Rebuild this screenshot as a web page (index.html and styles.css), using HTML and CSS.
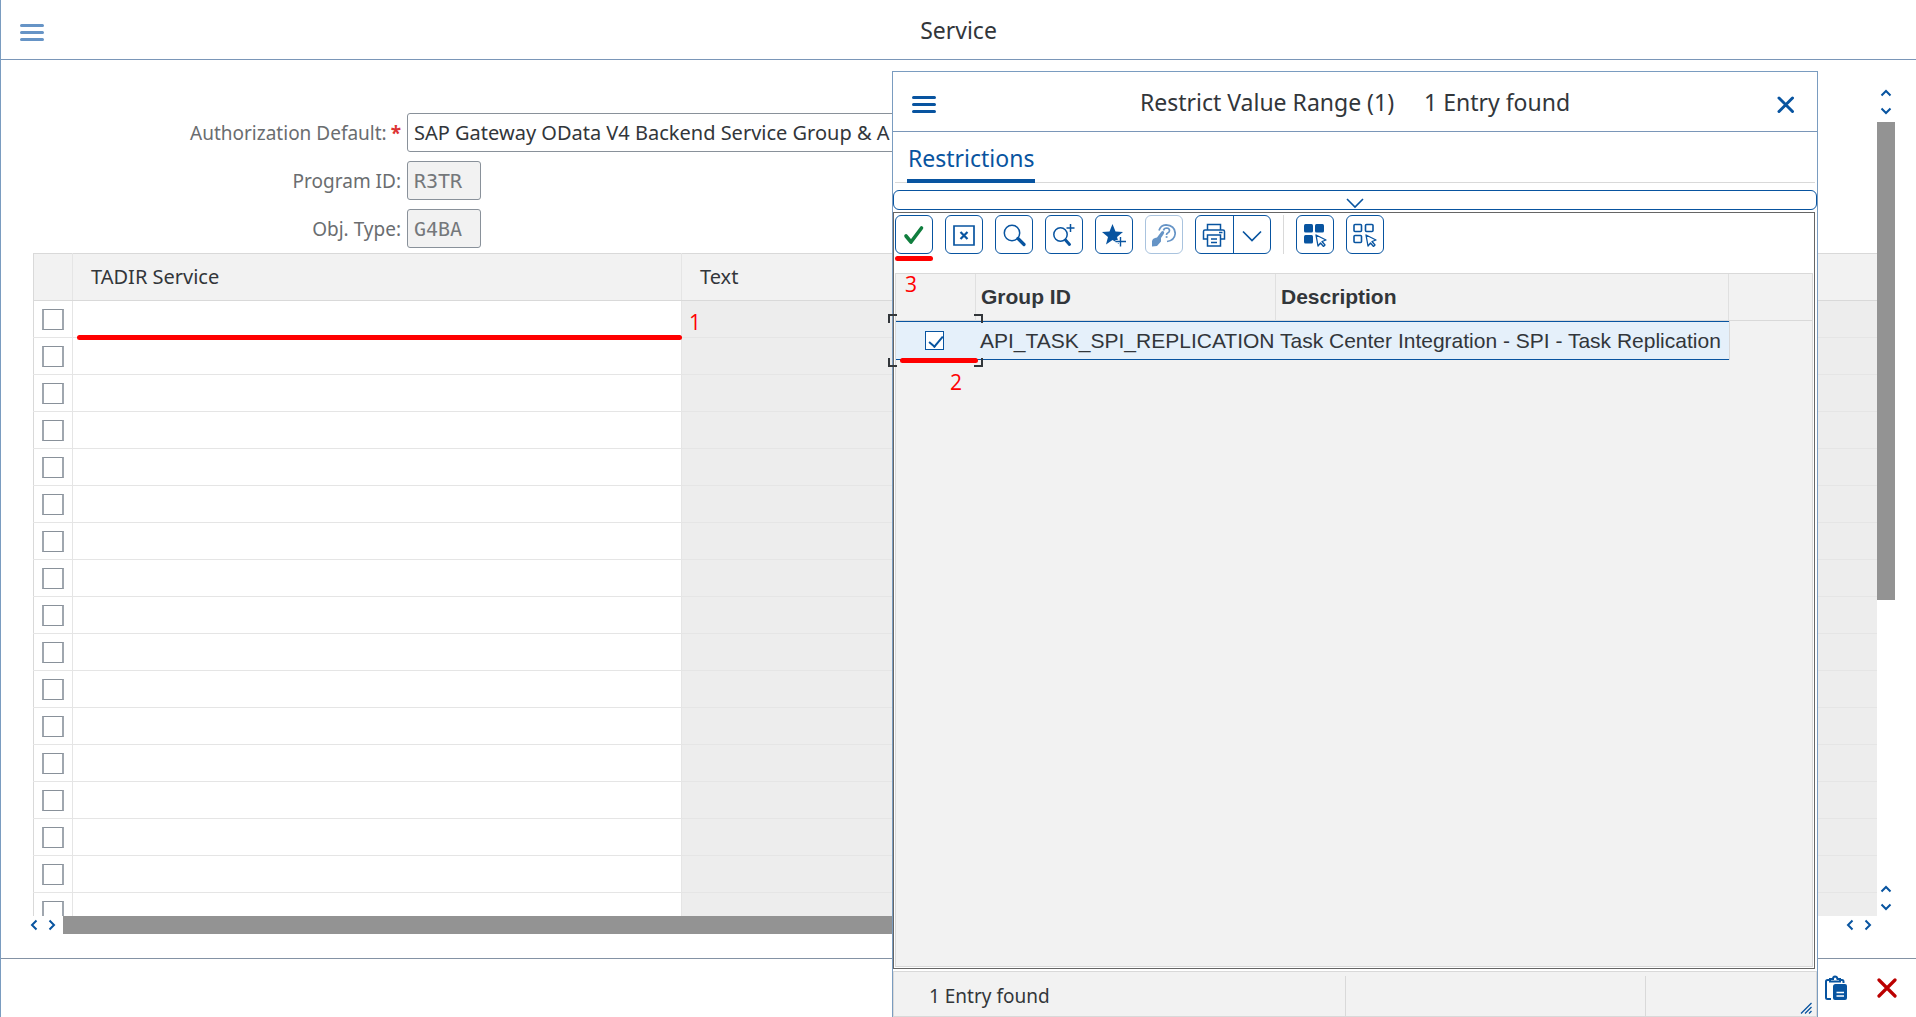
FILE: index.html
```html
<!DOCTYPE html>
<html lang="en">
<head>
<meta charset="utf-8">
<title>Service</title>
<link rel="stylesheet" href="styles.css">
</head>
<body>
<svg class="defs" aria-hidden="true">
  <symbol id="menu" viewBox="0 0 24 18"><path d="M1.500 1.500h21M1.500 8.500h21M1.500 15.500h21" stroke="currentColor" stroke-width="3" stroke-linecap="round"/></symbol>
  <symbol id="up" viewBox="0 0 18 18"><path d="M4.500 11.500 9 7l4.500 4.500" fill="none" stroke="currentColor" stroke-width="2"/></symbol>
  <symbol id="down" viewBox="0 0 18 18"><path d="M4.500 6.500 9 11l4.500-4.500" fill="none" stroke="currentColor" stroke-width="2"/></symbol>
  <symbol id="left" viewBox="0 0 18 18"><path d="M11.500 4.500 7 9l4.500 4.500" fill="none" stroke="currentColor" stroke-width="2"/></symbol>
  <symbol id="right" viewBox="0 0 18 18"><path d="M6.500 4.500 11 9l-4.500 4.500" fill="none" stroke="currentColor" stroke-width="2"/></symbol>
  <symbol id="pointer" viewBox="0 0 12 13"><path d="M1 1l10 5-4 1.500 3 3.500-1.500 1.500-3-3.500L3 12z" fill="#fff" stroke="currentColor" stroke-width="1.300" stroke-linejoin="round"/></symbol>
</svg>

<header class="shell-header">
  <button class="menu-button dim" aria-label="Menu"><svg width="24" height="18"><use href="#menu"/></svg></button>
  <h1>Service</h1>
</header>

<main class="workspace">
  <div class="content">
    <form class="fields">
      <label for="auth">Authorization Default:<span class="required">*</span></label>
      <select id="auth"><option>SAP Gateway OData V4 Backend Service Group &amp; A</option></select>
      <label for="program">Program ID:</label>
      <input id="program" type="text" value="R3TR" readonly>
      <label for="objtype">Obj. Type:</label>
      <input id="objtype" type="text" value="G4BA" readonly>
    </form>
    <table class="services">
      <colgroup><col class="col-select"><col class="col-service"><col></colgroup>
      <thead><tr><th></th><th>TADIR Service</th><th>Text</th></tr></thead>
      <tbody>
        <tr><td><input type="checkbox" aria-label="Select row 1"></td><td class="marked"><span class="stroke stroke-1"></span></td><td class="marked"><span class="step step-1">1</span></td></tr>
        <tr><td><input type="checkbox" aria-label="Select row 2"></td><td></td><td></td></tr>
        <tr><td><input type="checkbox" aria-label="Select row 3"></td><td></td><td></td></tr>
        <tr><td><input type="checkbox" aria-label="Select row 4"></td><td></td><td></td></tr>
        <tr><td><input type="checkbox" aria-label="Select row 5"></td><td></td><td></td></tr>
        <tr><td><input type="checkbox" aria-label="Select row 6"></td><td></td><td></td></tr>
        <tr><td><input type="checkbox" aria-label="Select row 7"></td><td></td><td></td></tr>
        <tr><td><input type="checkbox" aria-label="Select row 8"></td><td></td><td></td></tr>
        <tr><td><input type="checkbox" aria-label="Select row 9"></td><td></td><td></td></tr>
        <tr><td><input type="checkbox" aria-label="Select row 10"></td><td></td><td></td></tr>
        <tr><td><input type="checkbox" aria-label="Select row 11"></td><td></td><td></td></tr>
        <tr><td><input type="checkbox" aria-label="Select row 12"></td><td></td><td></td></tr>
        <tr><td><input type="checkbox" aria-label="Select row 13"></td><td></td><td></td></tr>
        <tr><td><input type="checkbox" aria-label="Select row 14"></td><td></td><td></td></tr>
        <tr><td><input type="checkbox" aria-label="Select row 15"></td><td></td><td></td></tr>
        <tr><td><input type="checkbox" aria-label="Select row 16"></td><td></td><td></td></tr>
        <tr><td><input type="checkbox" aria-label="Select row 17"></td><td></td><td></td></tr>
      </tbody>
    </table>
  </div>
  <div class="scroll vertical">
    <button aria-label="Scroll up"><svg><use href="#up"/></svg></button>
    <button aria-label="Scroll down"><svg><use href="#down"/></svg></button>
    <div class="track"><div class="thumb"></div></div>
    <button aria-label="Page up"><svg><use href="#up"/></svg></button>
    <button aria-label="Page down"><svg><use href="#down"/></svg></button>
  </div>
  <div class="scroll horizontal">
    <button aria-label="Scroll left"><svg><use href="#left"/></svg></button>
    <button aria-label="Scroll right"><svg><use href="#right"/></svg></button>
    <div class="track"><div class="thumb"></div></div>
    <button aria-label="Page left"><svg><use href="#left"/></svg></button>
    <button aria-label="Page right"><svg><use href="#right"/></svg></button>
  </div>
</main>

<footer class="shell-footer">
  <button aria-label="Paste from clipboard">
    <svg width="24" height="26" viewBox="0 0 24 26" fill="none" stroke="#0854a0" stroke-width="2"><path d="M6 5H3.500Q2 5 2 6.500v16Q2 24 3.500 24H7M17 5h1q1.500 0 1.500 1.500V8"/><path d="M6 6.500V4h3q0-2.500 2-2.500T13.500 4H16v2.500z"/><path d="M9 11.500Q9 9 11.500 9H21q2 0 2 2v12q0 2-2 2H11q-2 0-2-2z" fill="#0854a0" stroke="none"/><path d="M12.500 17.500H20M12.500 21H20" stroke="#fff" stroke-width="1.500"/></svg>
  </button>
  <button aria-label="Cancel">
    <svg width="20" height="20" viewBox="0 0 20 20" stroke="#b00" stroke-width="3.200" stroke-linecap="round"><path d="M2 2l16 16M18 2 2 18"/></svg>
  </button>
</footer>

<section class="dialog" role="dialog" aria-labelledby="dialog-title">
  <header class="dialog-header">
    <button class="menu-button" aria-label="Dialog menu"><svg width="24" height="18"><use href="#menu"/></svg></button>
    <h2 id="dialog-title">Restrict Value Range (1)<span class="count">1 Entry found</span></h2>
    <button class="close" aria-label="Close"><svg width="18" height="18" viewBox="0 0 18 18" stroke="currentColor" stroke-width="3" stroke-linecap="round"><path d="M2 2l13.500 13.500M15.500 2 2 15.500"/></svg></button>
  </header>
  <nav class="tabs"><a href="#restrictions">Restrictions</a></nav>
  <button class="expander" aria-label="Expand restrictions"><svg width="18" height="12" viewBox="0 0 18 12" fill="none" stroke="currentColor" stroke-width="1.600"><path d="M1 2l8 8 8-8"/></svg></button>
  <div class="results" id="restrictions">
    <div class="toolbar">
      <button class="tool marked" aria-label="Accept"><svg viewBox="0 0 24 24" fill="none" stroke="#107e3e" stroke-width="3.600" stroke-linecap="round" stroke-linejoin="round"><path d="M4 13l5 6L19.500 5"/></svg><span class="stroke stroke-3"></span></button>
      <button class="tool" aria-label="Cancel selection"><svg viewBox="0 0 24 24" fill="none" stroke="currentColor" stroke-width="1.700"><path d="M2 3h20v19H2z"/><path d="M8.500 9l7 7M15.500 9l-7 7" stroke-width="2.200"/></svg></button>
      <button class="tool" aria-label="Find"><svg viewBox="0 0 24 24" fill="none" stroke="currentColor" stroke-width="1.500"><circle cx="10" cy="10" r="7.700"/><path d="M16 15.500l6 6" stroke-width="3.200" stroke-linecap="round"/></svg></button>
      <button class="tool" aria-label="Find next"><svg viewBox="0 0 24 24" fill="none" stroke="currentColor" stroke-width="1.500"><circle cx="8.500" cy="11.500" r="6.700"/><path d="M18.500 1v8M14.500 5h8"/><path d="M13.500 17l4 4.500" stroke-width="3" stroke-linecap="round"/></svg></button>
      <button class="tool" aria-label="Add to favorites"><svg viewBox="0 0 24 24"><path d="M10.500 1l3 7.500 7.500.5-6 5 2 7-6.500-4L4 21.500 6 14 0 9l7.500-.5z" fill="currentColor"/><path d="M18.500 14v9.500M13.500 18.500H24" stroke="#fff" stroke-width="3"/><path d="M18.500 14v9.500M13.500 18.500H24" stroke="currentColor" stroke-width="1.400"/></svg></button>
      <button class="tool faded" aria-label="Help"><svg viewBox="0 0 24 24" fill="none" stroke="currentColor"><path d="M7 7.500Q8.500 2 14 1.800q9 .5 9.200 8.700-.5 7-8.200 8" stroke-width="1.700"/><path d="M11.500 7.500q.5-2.500 3.200-2.500 2.800.2 2.800 2.500 0 1.500-1.500 2.300-1.500.7-1.500 2.200" stroke-width="1.700"/><path d="M13.700 14h1.800" stroke-width="1.700"/><path d="M0 23.500V18q.5-2.500 3-3l2-.5 4.500-6Q11 7.500 12 8.800q.5 1-.3 2.200L9 15v3.500L5 23z" fill="currentColor" stroke="none"/></svg></button>
      <div class="split">
        <button aria-label="Print"><svg viewBox="0 0 24 24" fill="none" stroke="currentColor" stroke-width="1.500"><path d="M5.500 7V1.500h13V7"/><path d="M5.500 16H1.500V8.500Q1.500 7 3 7h18q1.500 0 1.500 1.500V16h-4"/><path d="M5.500 12h13v11h-13zM9 16h6M9 19.500h6M17 9.500h3.500"/></svg></button>
        <button aria-label="Print options"><svg viewBox="0 0 24 24" fill="none" stroke="currentColor" stroke-width="1.700"><path d="M3 8.500l9 9 9-9"/></svg></button>
      </div>
      <span class="divider"></span>
      <button class="tool" aria-label="Select all"><svg viewBox="0 0 24 24"><g fill="currentColor"><rect x="1" y="1" width="9" height="8.500" rx="1.500"/><rect x="12" y="1" width="9" height="8.500" rx="1.500"/><rect x="1" y="12" width="9" height="8.500" rx="1.500"/></g><use href="#pointer" x="12" y="11" width="12" height="13"/></svg></button>
      <button class="tool" aria-label="Deselect all"><svg viewBox="0 0 24 24"><g fill="none" stroke="currentColor" stroke-width="1.600"><rect x="1" y="1.500" width="7.500" height="7" rx="1"/><rect x="12.500" y="1.500" width="7.500" height="7" rx="1"/><rect x="1" y="12.500" width="7.500" height="7" rx="1"/></g><use href="#pointer" x="12" y="11" width="12" height="13"/></svg></button>
    </div>
    <div class="grid-area">
      <span class="step step-3">3</span>
      <table class="groups">
        <colgroup><col class="col-check"><col class="col-group"><col class="col-description"><col></colgroup>
        <thead><tr><th></th><th>Group ID</th><th>Description</th><th></th></tr></thead>
        <tbody><tr>
          <td class="marked"><input type="checkbox" checked aria-label="Select API_TASK_SPI_REPLICATION"><span class="focus"><i></i><i></i><i></i><i></i></span><span class="stroke stroke-2"></span><span class="step step-2">2</span></td>
          <td>API_TASK_SPI_REPLICATION</td><td>Task Center Integration - SPI - Task Replication</td><td></td>
        </tr></tbody>
      </table>
    </div>
  </div>
  <footer class="status">
    <span class="message">1 Entry found</span><span class="cell"></span>
    <span class="cell grip"><svg width="12" height="12" viewBox="0 0 12 12" stroke="#0854a0" stroke-width="1.300"><path d="M1 11.500 11.500 1M5 11.500l6.500-6.500M9 11.500 11.500 9"/></svg></span>
  </footer>
</section>
</body>
</html>
```
FILE: styles.css
```css
* { box-sizing: border-box; }

body {
  margin: 0;
  height: 100vh;
  display: flex;
  flex-direction: column;
  position: relative;
  overflow: hidden;
  border-left: 1px solid #7a9cc0;
  background: #fff;
  color: #32363a;
  font-family: "Noto Sans", sans-serif;
  font-size: 19px;
}

button {
  margin: 0;
  padding: 0;
  border: 0;
  background: none;
  color: #0854a0;
  display: flex;
  align-items: center;
  justify-content: center;
}

h1, h2 { margin: 0; font-size: 23px; font-weight: 400; line-height: 30px; }

.defs { display: none; }

.shell-header, .dialog-header {
  flex: none;
  display: grid;
  grid-template-columns: 60px 1fr 60px;
  align-items: center;
  height: 60px;
  border-bottom: 1px solid #7a96b8;
  text-align: center;
}
.menu-button { justify-content: flex-start; padding-left: 19px; padding-top: 7px; }
.dim { color: #6694c6; }

.workspace {
  flex: 1;
  min-height: 0;
  display: grid;
  grid-template-columns: minmax(0, 1fr) 18px;
  grid-template-rows: minmax(0, 1fr) 18px;
  padding: 24px 21px 24px 24px;
}
.content { overflow: hidden; padding: 29px 0 0 8px; }

.fields {
  display: grid;
  grid-template-columns: 368px 1fr;
  grid-auto-rows: 39px;
  gap: 9px 6px;
  align-items: center;
  margin-bottom: 5px;
  color: #6a6d70;
}
.fields label { text-align: right; }
.required { margin-left: 4px; color: #d33; font-weight: 700; }
.fields select, .fields input {
  appearance: none;
  height: 39px;
  margin: 0;
  padding: 0 6px;
  border: 1px solid #89919a;
  border-radius: 3px;
  background: #fff;
  color: #32363a;
  font: inherit;
  font-size: 20px;
}
.fields select { width: 640px; }
.fields input {
  width: 74px;
  background: #f2f2f2;
  color: #75787b;
  font-family: "DejaVu Sans Mono", monospace;
}

table { width: 100%; table-layout: fixed; border-collapse: collapse; }

.services th {
  height: 47px;
  padding: 0 18px 2px;
  border: 1px solid #d9d9d9;
  border-right-color: #e5e5e5;
  background: #f2f2f2;
  font-size: 20px;
  font-weight: 400;
  text-align: left;
}
.services td { height: 37px; padding: 0; border: 1px solid #e5e5e5; }
.services td:first-child { border-left-color: #d9d9d9; }
.services td:last-child { background: #ededed; }
.services th:last-child, .services td:last-child { border-right: 0; }
.col-select { width: 39px; }
.col-service { width: 609px; }

input[type="checkbox"] {
  appearance: none;
  display: block;
  width: 22px;
  height: 21px;
  margin: 0 auto;
  border: 1px solid #89919a;
  background: #fff;
}
.services input[type="checkbox"] { border-width: 1px 2px; border-color: #89919a #a0a7af; }

.scroll { display: flex; }
.scroll.vertical { flex-direction: column; }
.scroll button { flex: none; width: 18px; height: 18px; }
.scroll svg { width: 18px; height: 18px; }
.track { flex: 1; }
.thumb { background: #939393; }
.vertical .track { padding-top: 2px; }
.vertical .thumb { width: 18px; height: 63%; }
.horizontal .track { padding-left: 2px; }
.horizontal .thumb { width: 92%; height: 18px; }

.shell-footer {
  flex: none;
  display: flex;
  align-items: center;
  justify-content: flex-end;
  gap: 29px;
  height: 59px;
  padding-right: 19px;
  border-top: 1px solid #8492a4;
}

.dialog {
  position: absolute;
  top: 71px;
  right: 98px;
  bottom: 0;
  left: 891px;
  display: flex;
  flex-direction: column;
  border: 1px solid #7a9cc0;
  border-bottom: 0;
  background: #fff;
}
.count { margin-left: 30px; }
.close { padding: 6px 2px 0 0; }

.tabs {
  flex: none;
  display: flex;
  height: 51px;
  margin: 0 2px;
  padding-left: 12px;
  border-bottom: 1px solid #d9d9d9;
}
.tabs a {
  height: 51px;
  padding: 9px 1px 0;
  border-bottom: 4px solid #0854a0;
  color: #0854a0;
  font-size: 23px;
  line-height: 34px;
  text-decoration: none;
}
.expander {
  flex: none;
  height: 20px;
  margin: 7px 0 2px;
  border: 1px solid #0854a0;
  border-radius: 6px;
}
.expander svg { margin-top: 5px; }

.results {
  flex: 1;
  min-height: 0;
  display: flex;
  flex-direction: column;
  margin-right: 2px;
  padding: 2px 1px 1px;
  border: 1px solid #666;
}
.toolbar { flex: none; display: flex; gap: 12px; height: 58px; align-items: flex-start; }
.tool, .split { width: 38px; height: 39px; border: 1px solid #0854a0; border-radius: 6px; }
.toolbar svg { width: 24px; height: 24px; }
.tool.faded { color: #6694c6; border-color: #a9c3de; }
.split { display: flex; width: 76px; }
.split button { flex: 1; }
.split button + button { border-left: 1px solid #0854a0; }
.divider { width: 1px; height: 39px; background: #d9d9d9; }

.grid-area {
  flex: 1;
  position: relative;
  border: 1px solid #d9d9d9;
  background: #f2f2f2;
}
.groups {
  border-collapse: separate;
  border-spacing: 0;
  font-family: "Liberation Sans", Arial, sans-serif;
  font-size: 21px;
}
.groups th {
  height: 47px;
  padding: 0 5px;
  border-right: 1px solid #e0e0e0;
  border-bottom: 1px solid #d9d9d9;
  text-align: left;
}
.groups td {
  height: 39px;
  padding: 0 4px;
  border-top: 1px solid #0854a0;
  border-bottom: 1px solid #0854a0;
  background: #e5f0fa;
  white-space: nowrap;
}
.groups th:last-child { border-right: 0; }
.groups td:last-child { border-width: 0 0 0 1px; border-style: solid; border-color: #d9d9d9; background: none; }
.groups td:first-child { padding: 0; }
.col-check { width: 80px; }
.col-group { width: 300px; }
.col-description { width: 453px; }
.groups input[type="checkbox"] {
  position: relative;
  width: 19px;
  height: 19px;
  margin-left: 29px;
  border-color: #0854a0;
}
.groups input[type="checkbox"]::after {
  content: "";
  position: absolute;
  left: 6px;
  top: 1px;
  width: 6px;
  height: 12px;
  border: solid #0854a0;
  border-width: 0 2px 2px 0;
  transform: rotate(40deg);
}

.status {
  flex: none;
  display: grid;
  grid-template-columns: 451px 300px 1fr;
  height: 46px;
  margin-top: 2px;
  padding: 4px 0 2px;
  border: 1px solid #d9d9d9;
  background: #f2f2f2;
}
.message { padding-left: 35px; line-height: 40px; }
.cell { border-left: 1px solid #d9d9d9; }
.grip { display: flex; align-items: flex-end; justify-content: flex-end; padding: 0 4px 2px 0; }

/* Walkthrough marks */
.marked { position: relative; }
.stroke { position: absolute; height: 5px; border-radius: 3px; background: #f00; }
.stroke-1 { left: 4px; right: -1px; bottom: -3px; }
.stroke-2 { left: 4px; right: -2px; bottom: -4px; }
.stroke-3 { left: -1px; right: -1px; bottom: -8px; }
.step {
  position: absolute;
  color: #f00;
  font-family: "Open Sans", sans-serif;
  font-size: 21px;
  line-height: 24px;
}
.step-1 { left: 7px; top: 9px; }
.step-2 { left: 54px; top: 48px; }
.step-3 { left: 9px; top: -2px; }
.focus { position: absolute; inset: -8px -7px -8px -8px; }
.focus i { position: absolute; width: 9px; height: 9px; border: 0 solid #32363a; }
.focus i:nth-child(1) { left: 0; top: 0; border-width: 2px 0 0 2px; }
.focus i:nth-child(2) { right: 0; top: 0; border-width: 2px 2px 0 0; }
.focus i:nth-child(3) { left: 0; bottom: 0; border-width: 0 0 2px 2px; }
.focus i:nth-child(4) { right: 0; bottom: 0; border-width: 0 2px 2px 0; }
```
